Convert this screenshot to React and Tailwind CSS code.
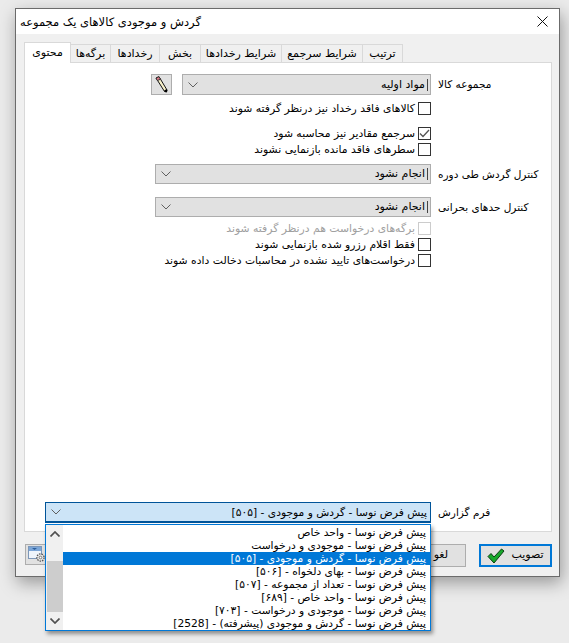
const font = { fontFamily: '"DejaVu Sans", sans-serif' };

function Chevron({ className = "", bold }) {
  return (
    <svg width="10" height="6" viewBox="0 0 10 6" className={className} fill="none" stroke={bold ? "#505050" : "#606060"} strokeWidth={bold ? "1.7" : "1"}>
      <path d="M0.5 0.5 L5 5 L9.5 0.5" />
    </svg>
  );
}

function Combo({ widthClass, heightClass = "h-[20px]", value }) {
  return (
    <div className={`${widthClass} ${heightClass} border border-[#adadad] bg-[#e1e1e1] flex items-center justify-between pl-[5px] pr-[2px]`}>
      <Chevron />
      <span dir="rtl" className="text-[11px] leading-[12px] text-black border-r border-[#444444] pr-[2px]">{value}</span>
    </div>
  );
}

function Check({ label, checked, disabled, className = "" }) {
  return (
    <div className={`flex justify-end items-center gap-[3px] h-[14px] ${className}`}>
      <span dir="rtl" className={`text-[10.8px] leading-[13px] whitespace-nowrap ${disabled ? "text-[#a0a0a0]" : "text-black"}`}>{label}</span>
      <span className={`w-[13px] h-[13px] border flex items-center justify-center bg-white ${disabled ? "border-[#cccccc]" : "border-[#333333]"}`}>
        {checked && (
          <svg width="11" height="9" viewBox="0 0 11 9" fill="none" stroke="#555555" strokeWidth="1.3">
            <path d="M1 4.5 L4 7.5 L10 1" />
          </svg>
        )}
      </span>
    </div>
  );
}

function Row({ label, children, className = "" }) {
  return (
    <div className={`flex items-center ${className}`}>
      <div className="w-[406px] flex justify-end shrink-0">{children}</div>
      <span dir="rtl" className="ml-[7px] text-[10.5px] leading-[13px] text-black whitespace-nowrap">{label}</span>
    </div>
  );
}

const tabs = [
  ["محتوی", "w-[47px]", true],
  ["برگه‌ها", "w-[40px]"],
  ["رخدادها", "w-[49px]"],
  ["بخش", "w-[41px]"],
  ["شرایط رخدادها", "w-[81px]"],
  ["شرایط سرجمع", "w-[81px]"],
  ["ترتیب", "w-[40px]"],
];

const items = [
  "پیش فرض نوسا - واحد خاص",
  "پیش فرض نوسا - موجودی و درخواست",
  "پیش فرض نوسا - گردش و موجودی - [۵۰۵]",
  "پیش فرض نوسا - بهای دلخواه - [۵۰۶]",
  "پیش فرض نوسا - تعداد از مجموعه - [۵۰۷]",
  "پیش فرض نوسا - واحد خاص - [۶۸۹]",
  "پیش فرض نوسا - موجودی و درخواست - [۷۰۳]",
  "پیش فرض نوسا - گردش و موجودی (پیشرفته) - [2528]",
];

export default function App() {
  return (
    <div style={font} className="relative w-[569px] h-[643px] bg-[#ebebeb] pt-[8px] pl-[15px] overflow-hidden">
      <div className="w-[545px] h-[569px] border border-[#6b6b6b] bg-[#f0f0f0] shadow-[2px_6px_16px_rgba(0,0,0,0.35)] flex flex-col">
        <div className="h-[25px] bg-white flex items-center justify-between pl-[4px] pr-[11px] shrink-0">
          <span dir="rtl" className="text-[11.5px] leading-[16px] text-black">گردش و موجودی کالاهای یک مجموعه</span>
          <svg width="11" height="11" viewBox="0 0 11 11" stroke="#111" strokeWidth="1" fill="none">
            <path d="M0.5 0.5 L10.5 10.5 M10.5 0.5 L0.5 10.5" />
          </svg>
        </div>
        <div className="pl-[8px] pt-[8px] flex items-end h-[28px] shrink-0">
          {tabs.map(([t, w, active]) => (
            <div
              key={t}
              dir="rtl"
              className={`${w} flex items-center justify-center text-[11px] text-black whitespace-nowrap border-t border-r border-[#d9d9d9] ${active ? "h-[21px] bg-white border-l -mb-px relative z-10" : "h-[18px] bg-[#f0f0f0] pt-[2px]"}`}
            >
              {t}
            </div>
          ))}
        </div>
        <div className="ml-[8px] w-[528px] h-[470px] border border-[#d9d9d9] bg-white flex flex-col shrink-0">
          <Row label="مجموعه کالا" className="mt-[11px]">
            <div className="flex gap-[10px]">
              <div className="w-[21px] h-[21px] border border-[#adadad] bg-[#e1e1e1] flex items-center justify-center">
                <svg width="14" height="17" viewBox="0 0 14 17">
                  <path d="M1 2 L4 0.7 L12 14 L11.5 16 L9.5 15.5 Z" fill="#f6efc8" stroke="#111" strokeWidth="1" />
                  <path d="M1 2 L4 0.7 L5.5 3.2 L2.4 4.6 Z" fill="#e07a88" stroke="#333" strokeWidth="1" />
                  <path d="M9.2 14.6 L11.6 13 L12.3 14.2 L11.8 16.2 L9.6 15.8 Z" fill="#000" />
                </svg>
              </div>
              <Combo widthClass="w-[249px]" heightClass="h-[21px]" value="مواد اولیه" />
            </div>
          </Row>
          <div className="w-[406px] flex flex-col">
            <Check className="mt-[6px]" label="کالاهای فاقد رخداد نیز درنظر گرفته شوند" />
            <Check className="mt-[11px]" checked label="سرجمع مقادیر نیز محاسبه شود" />
            <Check className="mt-[2px]" label="سطرهای فاقد مانده بازنمایی نشوند" />
          </div>
          <Row label="کنترل گردش طی دوره" className="mt-[8px]">
            <Combo widthClass="w-[276px]" value="انجام نشود" />
          </Row>
          <Row label="کنترل حدهای بحرانی" className="mt-[13px]">
            <Combo widthClass="w-[276px]" value="انجام نشود" />
          </Row>
          <div className="w-[406px] flex flex-col">
            <Check className="mt-[4px]" disabled label="برگه‌های درخواست هم درنظر گرفته شوند" />
            <Check className="mt-[2px]" label="فقط اقلام رزرو شده بازنمایی شوند" />
            <Check className="mt-[2px]" label="درخواست‌های تایید نشده در محاسبات دخالت داده شوند" />
          </div>
          <Row label="فرم گزارش" className="mt-auto mb-[8px]">
            <div className="w-[386px] h-[21px] border border-b-2 border-[#005499] bg-[#cce4f7] flex items-center justify-between pl-[5px] pr-[3px]">
              <Chevron />
              <span dir="rtl" className="text-[10.7px] leading-[13px] text-black">{items[2]}</span>
            </div>
          </Row>
        </div>
        <div className="flex-1 flex items-start justify-between pl-[9px] pr-[7px] pt-[12px]">
          <div className="w-[24px] h-[21px] border border-[#adadad] bg-[#e1e1e1] flex items-center justify-start pl-[2px]">
            <svg width="18" height="17" viewBox="0 0 18 17">
              <rect x="0.5" y="0.5" width="13" height="12" fill="#eef4fb" stroke="#7d97b8" />
              <rect x="1" y="1" width="12" height="4" fill="#7ba6d8" />
              <path d="M4 2 L9 2 L6.5 4 Z" fill="#2f5f9c" />
              <circle cx="12.5" cy="11.5" r="3.6" fill="#e4e4e4" stroke="#555" strokeWidth="1.3" strokeDasharray="1.5 1" />
              <circle cx="12.5" cy="11.5" r="1.3" fill="#fff" stroke="#555" strokeWidth="0.7" />
            </svg>
          </div>
          <div className="flex gap-[13px]">
            <div className="w-[71px] h-[23px] border border-[#adadad] bg-[#e1e1e1] flex items-center justify-end pr-[17px]">
              <span dir="rtl" className="text-[11px] text-black">لغو</span>
            </div>
            <div className="w-[73px] h-[23px] border-2 border-[#0078d7] bg-[#e1e1e1] flex items-center justify-center gap-[6px]">
              <svg width="18" height="16" viewBox="0 0 18 16">
                <path d="M1 8.5 L4 5.5 L7 9 L14.5 1 L17 3 L7 15 Z" fill="#17a82b" stroke="#0a3d12" strokeWidth="1" />
              </svg>
              <span dir="rtl" className="text-[11px] text-black">تصویب</span>
            </div>
          </div>
        </div>
      </div>

      <div className="absolute left-[45px] top-[524px] w-[386px] h-[107px] border border-[#0078d7] bg-white shadow-[2px_3px_4px_rgba(0,0,0,0.4)] flex">
        <div className="w-[17px] bg-[#f0f0f0] flex flex-col shrink-0 pl-[1px]">
          <div className="h-[17px] flex items-center justify-center">
            <Chevron bold className="rotate-180" />
          </div>
          <div className="h-[19px]" />
          <div className="h-[51px] bg-[#cdcdcd]" />
          <div className="h-[18px] flex items-center justify-center">
            <Chevron bold />
          </div>
        </div>
        <div className="flex-1 flex flex-col pt-[1px] overflow-hidden">
          {items.map((t, i) => (
            <div
              key={t}
              dir="rtl"
              className={`h-[13px] leading-[13px] text-[10.7px] pr-[4px] whitespace-nowrap ${i === 2 ? "bg-[#0078d7] text-white" : "text-black"}`}
            >
              {t}
            </div>
          ))}
        </div>
      </div>
    </div>
  );
}
